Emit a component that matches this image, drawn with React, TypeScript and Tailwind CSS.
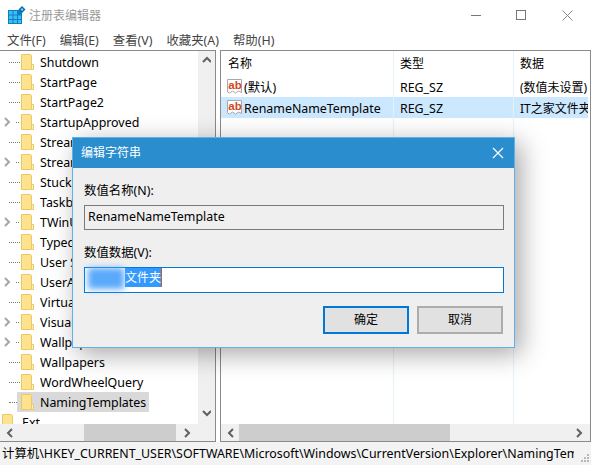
const sans = "font-['Noto_Sans','Noto_Sans_CJK_SC',sans-serif]";

const treeItems = [
  { name: "Shutdown" },
  { name: "StartPage" },
  { name: "StartPage2" },
  { name: "StartupApproved", arrow: true },
  { name: "Streams" },
  { name: "StreamMRU", arrow: true },
  { name: "StuckRects3" },
  { name: "Taskband" },
  { name: "TWinUI", arrow: true },
  { name: "TypedPaths" },
  { name: "User Shell Folders" },
  { name: "UserAssist", arrow: true },
  { name: "VirtualDesktops" },
  { name: "VisualEffects", arrow: true },
  { name: "Wallpaper", arrow: true },
  { name: "Wallpapers" },
  { name: "WordWheelQuery" },
  { name: "NamingTemplates", selected: true },
];

function Folder() {
  return (
    <svg width="13" height="16" viewBox="0 0 13 16" className="shrink-0">
      <path d="M.5.5h9l1 1v14h-10z" fill="#fde28f" stroke="#ecc95f" />
      <path d="M10.500 10.500h2v5h-2z" fill="#fff0bd" stroke="#ecc95f" />
    </svg>
  );
}

function Chevron({ dir, color = "#606060", className }: { dir: "left" | "right" | "up" | "down"; color?: string; className?: string }) {
  const d = {
    left: "M6 1 2 5l4 4",
    right: "M2 1l4 4-4 4",
    up: "M1 6l4-4 4 4",
    down: "M1 2l4 4 4-4",
  }[dir];
  return (
    <svg width="9" height="10" viewBox="0 0 9 10" className={className}>
      <path d={d} fill="none" stroke={color} strokeWidth="2" />
    </svg>
  );
}

function RegIcon() {
  return (
    <svg width="17" height="17" viewBox="0 0 17 17" className="shrink-0">
      <path d="M1.500 1.500h14v13l-3-1.500-3 2-3-2-3 2-2-1z" fill="#fff" stroke="#a8a8a8" />
      <text x="2.300" y="11" fontSize="11.500" fontWeight="700" fill="#d2451e" fontFamily="Liberation Sans">ab</text>
    </svg>
  );
}

function AppIcon() {
  return (
    <svg width="18" height="18" viewBox="0 0 18 18">
      <path d="M0 4h14v14H0z" fill="#0b7fc4" />
      <path d="M1 5h3.500v3.500H1zM5.500 5H9v3.500H5.500zM1 9.500h3.500V13H1zM5.500 9.500H9V13H5.500zM10 9.500h3V13h-3zM1 14h3.500v3H1zM5.500 14H9v3H5.500zM10 14h3v3h-3z" fill="#3cc0f2" />
      <path d="M14 0l3.500 3.500L14 7l-3.500-3.500z" fill="#0a6db0" />
      <path d="M14 2l1.500 1.500L14 5l-1.500-1.500z" fill="#7fd3f7" />
    </svg>
  );
}

function Tree() {
  return (
    <div className="relative w-[216px] h-full border-t border-r border-b border-[#8a8a8a] bg-white overflow-hidden">
      <div className="flex flex-col pt-px h-[373px] overflow-hidden">
        {treeItems.map((t) => (
          <div key={t.name} className="h-5 shrink-0 flex items-center">
            {t.selected ? (
              <div className="w-[17px] flex items-center pl-[9px]">
                <div className="w-[8px] border-t border-dotted border-[#777]" />
              </div>
            ) : t.arrow ? (
              <div className="w-[21px] flex items-center pl-[3px]">
                <Chevron dir="right" color="#a6a6a6" />
                <div className="ml-[4px] w-[3px] border-t border-dotted border-[#777]" />
              </div>
            ) : (
              <div className="w-[21px] flex items-center pl-[9px]">
                <div className="w-[11px] border-t border-dotted border-[#777]" />
              </div>
            )}
            <div className={`flex items-center h-5 ${t.selected ? "bg-[#d9d9d9] pl-[4px] pr-[3px]" : ""}`}>
              <Folder />
              <span className="ml-[6px] mt-[2px] text-[12.400px] leading-5 text-black whitespace-nowrap">{t.name}</span>
            </div>
          </div>
        ))}
        <div className="h-5 shrink-0 flex items-center pl-[2px]">
          <Folder />
          <span className="ml-[7px] mt-[2px] text-[12.400px] leading-5 text-black">Ext</span>
        </div>
      </div>
      <div className="absolute right-0 top-0 bottom-[17px] w-[17px] bg-[#f0f0f0] flex flex-col justify-between items-center py-[5px]">
        <Chevron dir="up" />
        <Chevron dir="down" />
      </div>
      <div className="h-[17px] bg-[#f0f0f0] flex items-center justify-between pl-[6px] pr-[23px] relative">
        <Chevron dir="left" />
        <div className="absolute left-[84px] w-[92px] top-0 bottom-0 bg-[#cdcdcd]" />
        <Chevron dir="right" />
      </div>
    </div>
  );
}

function ValueRow({ name, data, selected }: { name: string; data: string; selected?: boolean }) {
  return (
    <div className={`flex h-[21px] items-center mr-[2px] ${selected ? "bg-[#cce8ff]" : ""}`}>
      <div className="w-[172px] flex items-center pl-[5px]">
        <RegIcon />
        <span className="ml-px pt-[3px] text-[12.400px] whitespace-nowrap">{name}</span>
      </div>
      <div className="w-[120px] pl-[7px] pt-[3px] text-[12.400px]">REG_SZ</div>
      <div className="flex-1 pl-[7px] pt-[3px] text-[12px] whitespace-nowrap overflow-hidden">{data}</div>
    </div>
  );
}

function ValuesPane() {
  return (
    <div className="relative flex-1 h-full border border-[#8a8a8a] bg-white overflow-hidden flex flex-col">
      <div className="absolute top-0 bottom-[17px] left-[172px] w-px bg-[#e5f1fb]" />
      <div className="absolute top-0 bottom-[17px] left-[292px] w-px bg-[#e5f1fb]" />
      <div className="h-[25px] flex items-center text-[12px] shrink-0">
        <div className="w-[172px] pl-[7px]">名称</div>
        <div className="w-[120px] pl-[7px]">类型</div>
        <div className="pl-[7px]">数据</div>
      </div>
      <ValueRow name="(默认)" data="(数值未设置)" />
      <ValueRow name="RenameNameTemplate" data="IT之家文件夹" selected />
      <div className="flex-1" />
      <div className="h-[17px] bg-[#f0f0f0] flex items-center justify-between px-[6px] relative shrink-0">
        <Chevron dir="left" />
        <div className="absolute left-[18px] right-[140px] top-0 bottom-0 bg-[#cdcdcd]" />
        <Chevron dir="right" />
      </div>
    </div>
  );
}

function Dialog() {
  return (
    <div className="absolute left-[72px] top-[137px] w-[443px] h-[211px] border border-[#5eb1ea] bg-[#efefef] shadow-[6px_6px_24px_rgba(0,0,0,0.35)] flex flex-col">
      <div className="h-[30px] bg-[#2a8dcd] flex items-center justify-between pl-[8px] pr-[10px] text-white text-[12px] shrink-0">
        <span>编辑字符串</span>
        <svg width="12" height="12" viewBox="0 0 12 12">
          <path d="M1 1l10 10M11 1 1 11" stroke="#fff" strokeWidth="1.200" />
        </svg>
      </div>
      <div className="flex flex-col px-[11px] pt-[13px] text-[12.400px] text-black">
        <div className="leading-5">数值名称(N):</div>
        <div className="mt-[4px] -mr-px h-[25px] border border-[#7a7a7a] bg-[#efefef] flex items-center pl-[3px]">RenameNameTemplate</div>
        <div className="mt-[13px] leading-5">数值数据(V):</div>
        <div className="mt-[4px] -mr-px h-[26px] border border-[#0078d7] bg-white flex items-start relative">
          <span className="h-[19px] flex items-center bg-[#3399ff] text-white text-[12px] ml-[40px] border-r border-[#b5672f]">文件夹</span>
          <div className="absolute left-[3px] top-0 w-[36px] h-[21px] bg-[#5aa9fb] blur-[3px]" />
        </div>
        <div className="flex justify-end gap-[8px] mt-[13px] text-[12px]">
          <button className="w-[86px] h-[28px] border-2 border-[#0078d7] bg-[#e1e1e1]">确定</button>
          <button className="w-[86px] h-[28px] border-2 border-[#adadad] bg-[#e1e1e1]">取消</button>
        </div>
      </div>
    </div>
  );
}

export default function App() {
  return (
    <div className={`relative w-[591px] h-[465px] overflow-hidden bg-white flex flex-col ${sans}`}>
      <div className="h-[30px] flex items-center shrink-0 pl-[8px]">
        <AppIcon />
        <span className="ml-[3px] pt-[2px] text-[12px] text-[#999]">注册表编辑器</span>
        <div className="ml-auto flex items-center pr-[18px]">
          <div className="w-[10px] h-px bg-[#777]" />
          <div className="ml-[35px] w-[10px] h-[10px] border border-[#777]" />
          <svg width="11" height="11" viewBox="0 0 11 11" className="ml-[36px]">
            <path d="M.5.5l10 10M10.500.5l-10 10" stroke="#888" />
          </svg>
        </div>
      </div>
      <div className="h-[20px] flex items-center gap-[14px] pl-[7px] pt-[2px] text-[12.400px] text-[#444] shrink-0">
        <span>文件(F)</span>
        <span>编辑(E)</span>
        <span>查看(V)</span>
        <span>收藏夹(A)</span>
        <span>帮助(H)</span>
      </div>
      <div className="h-[392px] flex gap-[4px] shrink-0">
        <Tree />
        <ValuesPane />
      </div>
      <div className="flex-1 flex items-center pl-[2px] pt-[2px] text-[12.400px] bg-[#f3f3f3] relative overflow-hidden">
        <span className="whitespace-nowrap w-[572px] overflow-hidden">{"计算机\\HKEY_CURRENT_USER\\SOFTWARE\\Microsoft\\Windows\\CurrentVersion\\Explorer\\NamingTemplates"}</span>
        <svg width="10" height="10" viewBox="0 0 10 10" className="absolute right-[1px] bottom-[2px]">
          <path d="M7 1h2v2H7zM4 4h2v2H4zM7 4h2v2H7zM1 7h2v2H1zM4 7h2v2H4zM7 7h2v2H7z" fill="#b8b8b8" />
        </svg>
      </div>
      <Dialog />
    </div>
  );
}
